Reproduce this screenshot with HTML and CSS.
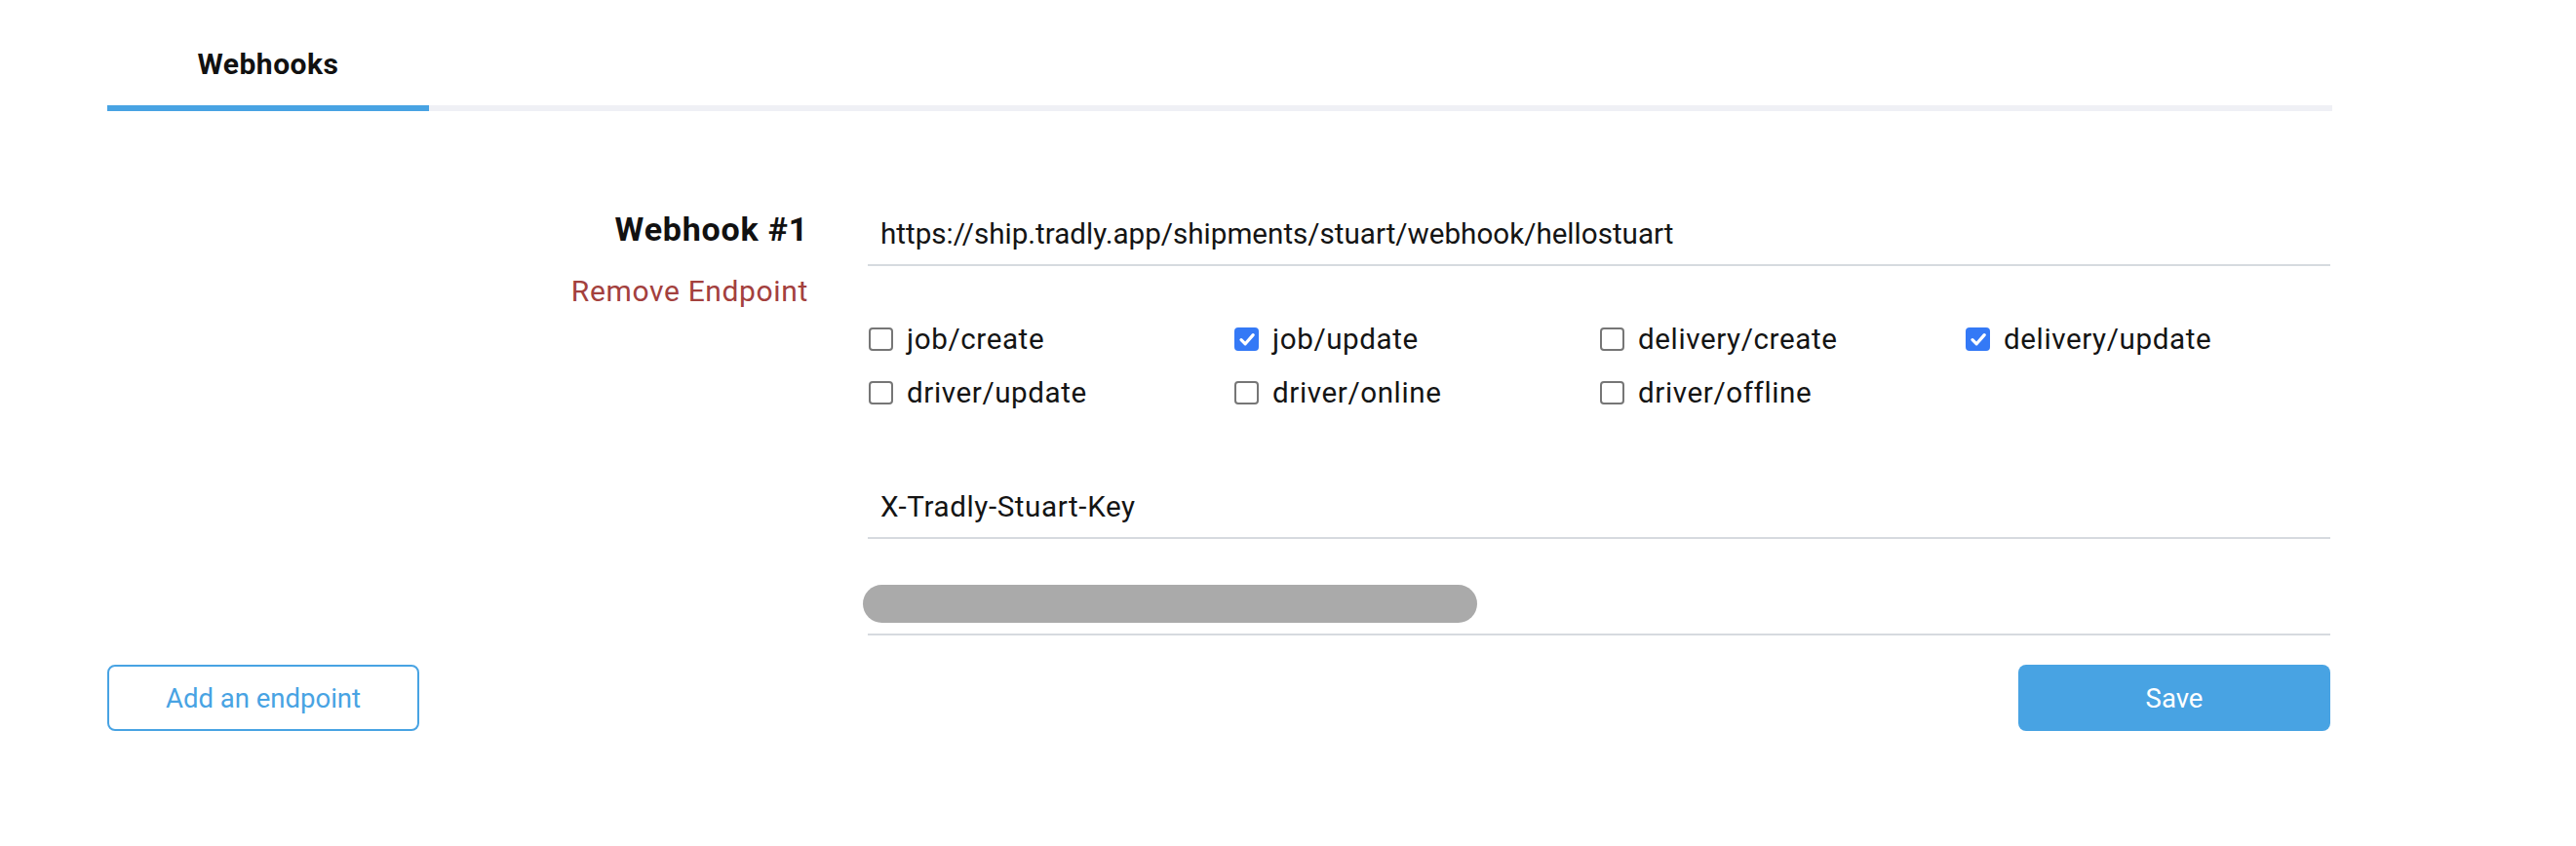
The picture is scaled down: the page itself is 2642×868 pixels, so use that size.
FILE: index.html
```html
<!DOCTYPE html>
<html lang="en">
<head>
<meta charset="utf-8">
<title>Webhooks</title>
<link rel="stylesheet" href="styles.css">
</head>
<body>
<div class="page">
  <nav class="tabs">
    <div class="tab tab-active">Webhooks</div>
  </nav>

  <section class="webhook">
    <div class="webhook-meta">
      <div class="webhook-title">Webhook #1</div>
      <div class="webhook-remove">Remove Endpoint</div>
    </div>
    <div class="webhook-fields">
      <div class="field"><span class="field-text">https://ship.tradly.app/shipments/stuart/webhook/hellostuart</span></div>

      <div class="events">
        <label class="event"><span class="box"></span><span class="event-name">job/create</span></label>
        <label class="event"><span class="box box-checked"><svg viewBox="0 0 24 24" width="24" height="24"><path d="M6 12.6 L10.2 16.8 L18.2 7.6" fill="none" stroke="#fff" stroke-width="3.2" stroke-linecap="round" stroke-linejoin="round"/></svg></span><span class="event-name">job/update</span></label>
        <label class="event"><span class="box"></span><span class="event-name">delivery/create</span></label>
        <label class="event"><span class="box box-checked"><svg viewBox="0 0 24 24" width="24" height="24"><path d="M6 12.6 L10.2 16.8 L18.2 7.6" fill="none" stroke="#fff" stroke-width="3.2" stroke-linecap="round" stroke-linejoin="round"/></svg></span><span class="event-name">delivery/update</span></label>
        <label class="event"><span class="box"></span><span class="event-name">driver/update</span></label>
        <label class="event"><span class="box"></span><span class="event-name">driver/online</span></label>
        <label class="event"><span class="box"></span><span class="event-name">driver/offline</span></label>
      </div>

      <div class="field field-key"><span class="field-text">X-Tradly-Stuart-Key</span></div>

      <div class="field field-secret"><span class="secret-pill"></span></div>
    </div>
  </section>

  <div class="actions">
    <button class="btn btn-outline">Add an endpoint</button>
    <button class="btn btn-primary">Save</button>
  </div>
</div>
</body>
</html>
```
FILE: styles.css
```css
* { box-sizing: border-box; }

body {
  margin: 0;
  background: #ffffff;
  font-family: "Roboto", "Liberation Sans", sans-serif;
  color: #141414;
}

.page {
  margin-left: 110px;
  width: 2282px;
}

.tabs {
  display: flex;
  margin-top: 48px;
  border-bottom: 6px solid #eff0f5;
}

.tab {
  width: 330px;
  text-align: center;
  font-size: 30px;
  font-weight: 700;
  line-height: 36px;
  letter-spacing: 0.5px;
  padding-bottom: 24px;
  color: #111111;
}

.tab-active {
  border-bottom: 6px solid #48a3e3;
  margin-bottom: -6px;
}

.webhook {
  display: grid;
  grid-template-columns: 719px 1500px;
  column-gap: 61px;
  margin-top: 95px;
}

.webhook-meta {
  text-align: right;
  margin-top: 6px;
}

.webhook-title {
  font-size: 34px;
  font-weight: 700;
  line-height: 40px;
  letter-spacing: 0.8px;
  color: #111111;
}

.webhook-remove {
  margin-top: 26px;
  font-size: 30px;
  line-height: 36px;
  letter-spacing: 0.65px;
  color: #a3403d;
}

.field {
  padding: 13px 0 13px 13px;
  border-bottom: 2px solid #d6dadf;
  font-size: 29.6px;
  line-height: 36px;
  color: #141414;
}

.events {
  display: grid;
  grid-template-columns: repeat(4, 375px);
  row-gap: 19px;
  margin-top: 57px;
}

.event {
  display: flex;
  align-items: center;
  height: 36px;
  font-size: 29.6px;
  line-height: 36px;
  letter-spacing: 0.6px;
  color: #141414;
}

.box {
  width: 25px;
  height: 24px;
  margin-left: 1px;
  margin-right: 14px;
  border: 2px solid #767676;
  border-radius: 4px;
  background: #ffffff;
  display: flex;
  align-items: center;
  justify-content: center;
}

.box-checked {
  border: none;
  background: #3479f6;
}

.box-checked svg {
  display: block;
}

.field-key {
  margin-top: 68px;
}

.field-key .field-text {
  letter-spacing: 0.6px;
}

.field-secret {
  margin-top: 34px;
  padding: 13px 0 11px 0;
}

.secret-pill {
  display: block;
  width: 630px;
  height: 39px;
  margin-left: -5px;
  border-radius: 20px;
  background: #aaaaaa;
}

.actions {
  display: flex;
  justify-content: space-between;
  width: 2280px;
  margin-top: 30px;
}

.btn {
  width: 320px;
  height: 68px;
  border-radius: 8px;
  font-family: "Roboto", "Liberation Sans", sans-serif;
  font-size: 27.5px;
  cursor: pointer;
}

.btn-outline {
  background: #ffffff;
  border: 2px solid #48a3e3;
  color: #48a3e3;
}

.btn-primary {
  background: #48a3e3;
  border: none;
  color: #ffffff;
}
```
